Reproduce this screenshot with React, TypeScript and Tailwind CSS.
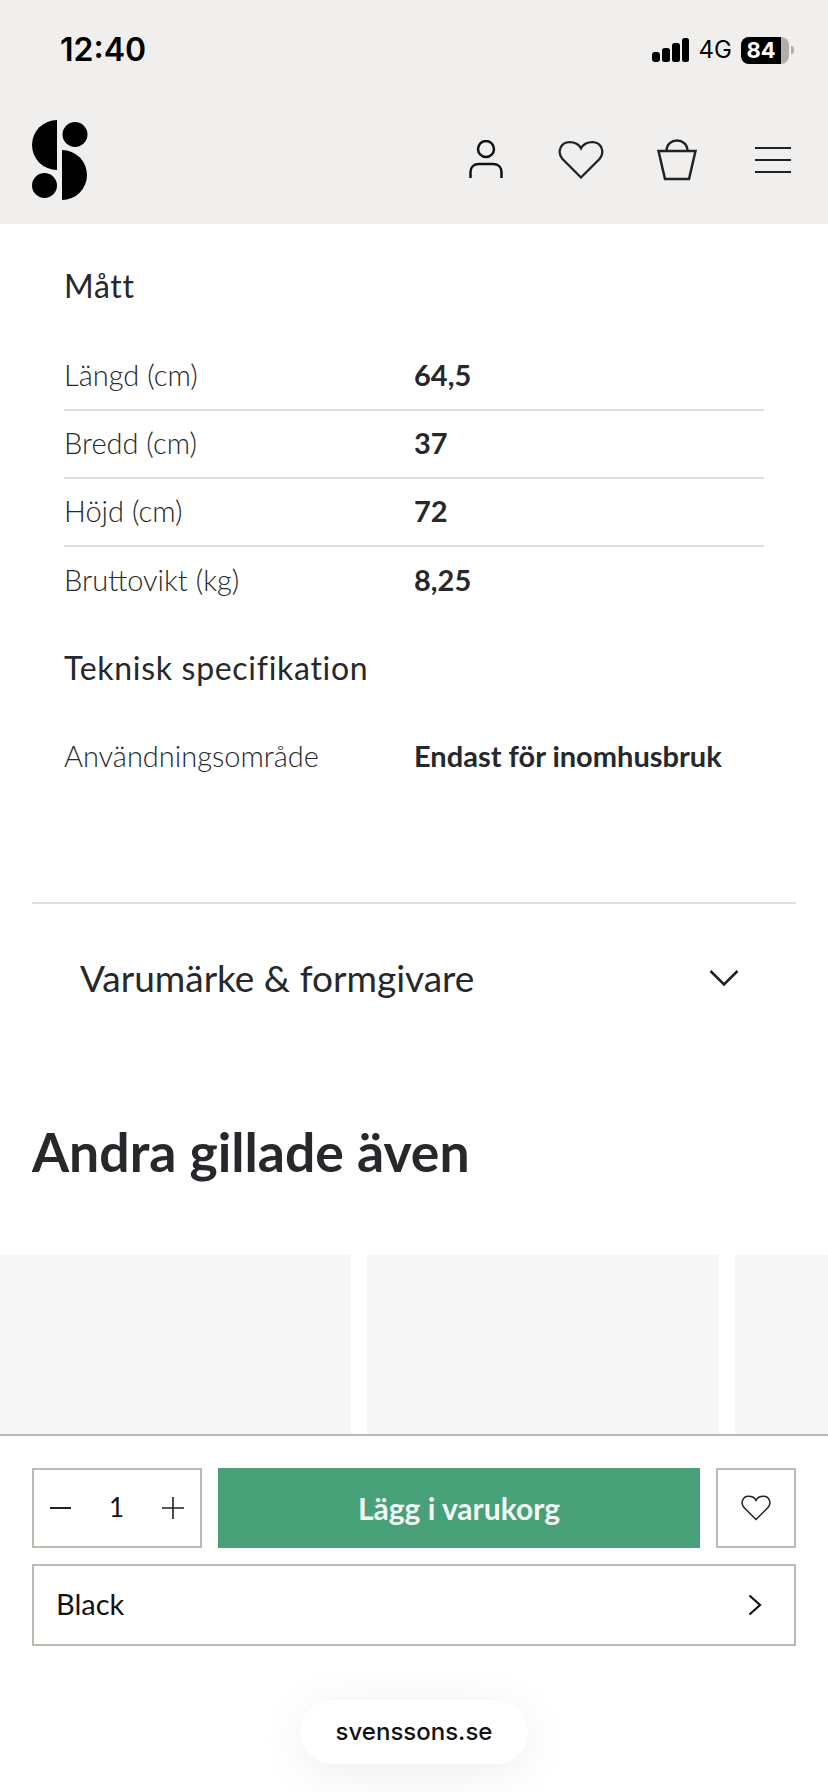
const ff = "font-['Lato','Inter',sans-serif]";

function Row({ label, value, border = true }: { label: string; value: string; border?: boolean }) {
  return (
    <div className={`flex h-[68px] items-center pb-[2px] ${border ? "border-b-2 border-[#dedede]" : ""}`}>
      <div className="w-[350px] text-[29px] font-light text-[#26282b]">{label}</div>
      <div className="text-[29px] font-bold text-[#26282b]">{value}</div>
    </div>
  );
}

function Logo() {
  return (
    <svg width="56" height="80" viewBox="0 0 56 80" fill="#000">
      <path d="M25 0 A25 25 0 0 0 0 25 A25 25 0 0 0 25 50 Z" />
      <circle cx="43" cy="14.5" r="12.5" />
      <circle cx="12.5" cy="65.5" r="12.5" />
      <path d="M30 30 A25 25 0 0 1 55 55 A25 25 0 0 1 30 80 Z" />
    </svg>
  );
}

function Heart({ size, sw }: { size: number; sw: number }) {
  return (
    <svg width={size} height={size * 0.86} viewBox="0 0 44 38" fill="none" stroke="#222" strokeWidth={sw} strokeLinejoin="miter">
      <path d="M22 36 L4 18 C-1 12 2 2 11 2 C16 2 20 4 22 8 C24 4 28 2 33 2 C42 2 45 12 40 18 Z" />
    </svg>
  );
}

export default function App() {
  return (
    <div className={`flex h-[1792px] w-[828px] flex-col overflow-hidden bg-white ${ff}`}>
      <header className="h-[224px] shrink-0 bg-[#f0efee]">
        <div className="flex h-[100px] items-center justify-between pl-[60px] pr-[34px]">
          <span className="font-['Inter'] text-[32px] font-semibold text-black">12:40</span>
          <div className="flex items-center gap-[9px]">
            <svg width="38" height="24" viewBox="0 0 38 24" fill="#000">
              <rect x="0" y="14" width="8" height="10" rx="3" />
              <rect x="10" y="10" width="8" height="14" rx="2.5" />
              <rect x="20" y="5" width="8" height="19" rx="2.5" />
              <rect x="30" y="0" width="7" height="24" rx="2.5" />
            </svg>
            <span className="font-['Inter'] text-[24px] font-normal text-black">4G</span>
            <div className="flex items-center gap-[2px]">
              <div className="relative flex h-[27px] w-[48px] items-center overflow-hidden rounded-[8px] bg-[#b0afae]">
                <div className="flex h-full w-[40px] items-center justify-center bg-black font-['Inter'] text-[22px] font-bold text-white">84</div>
              </div>
              <div className="h-[8px] w-[3px] rounded-r-full bg-[#b0afae]" />
            </div>
          </div>
        </div>
        <div className="flex items-start justify-between pl-[32px] pr-[37px] pt-[20px]">
          <Logo />
          <div className="flex items-center pt-[19px]">
            <svg className="mr-[55px]" width="34" height="40" viewBox="0 0 34 40" fill="none" stroke="#111" strokeWidth="2.5">
              <circle cx="17" cy="9" r="8" />
              <path d="M1.5 38 V32 C1.5 27 5 24 10 24 H24 C29 24 32.5 27 32.5 32 V38" />
            </svg>
            <div className="mr-[53px]"><Heart size={46} sw={2.2} /></div>
            <svg className="mr-[58px]" width="40" height="42" viewBox="0 0 40 42" fill="none" stroke="#222" strokeWidth="2.5">
              <path d="M1.5 12 H38.5 L32 40 H8 Z" />
              <path d="M9.5 12 C9.5 -2 30.5 -2 30.5 12" />
            </svg>
            <div className="flex w-[36px] flex-col gap-[10px]">
              <div className="h-[2px] bg-[#222]" />
              <div className="h-[2px] bg-[#222]" />
              <div className="h-[2px] bg-[#222]" />
            </div>
          </div>
        </div>
      </header>

      <main className="flex-1 overflow-hidden">
        <section className="px-[64px] pt-[40px]">
          <h3 className="text-[32px] leading-[44px] font-normal tracking-[0.7px] text-[#26282b]">Mått</h3>
          <div className="mt-[35px]">
            <Row label="Längd (cm)" value="64,5" />
            <Row label="Bredd (cm)" value="37" />
            <Row label="Höjd (cm)" value="72" />
            <Row label="Bruttovikt (kg)" value="8,25" border={false} />
          </div>
          <h3 className="mt-[31px] text-[32px] leading-[44px] font-normal tracking-[0.7px] text-[#26282b]">Teknisk specifikation</h3>
          <div className="mt-[33px]">
            <Row label="Användningsområde" value="Endast för inomhusbruk" border={false} />
          </div>
        </section>
        <div className="mx-[32px] mt-[111px] flex h-[150px] items-center justify-between border-t-2 border-[#e0dfdc] pl-[48px] pr-[57px] pb-[1px]">
          <span className="text-[37px] font-normal text-[#26282b]">Varumärke &amp; formgivare</span>
          <svg width="30" height="18" viewBox="0 0 30 18" fill="none" stroke="#222" strokeWidth="2.6"><path d="M1.5 2 L15 15.5 L28.5 2" /></svg>
        </div>
        <h2 className="mx-[32px] mt-[69px] text-[53.5px] leading-[60px] font-bold text-[#26282b]">Andra gillade även</h2>
        <div className="mt-[74px] flex gap-[16px]">
          <div className="h-[200px] w-[351px] shrink-0 bg-[#f6f6f6]" />
          <div className="h-[200px] w-[352px] shrink-0 bg-[#f6f6f6]" />
          <div className="h-[200px] w-[352px] shrink-0 bg-[#f6f6f6]" />
        </div>
      </main>

      <footer className="h-[358px] shrink-0 border-t-2 border-[#bdb9b1] bg-white px-[32px] pt-[32px]">
        <div className="flex h-[80px] gap-[16px]">
          <div className="flex w-[170px] items-center justify-between border-2 border-[#bdb9b1] pl-[16px] pr-[16px]">
            <div className="h-[2px] w-[21px] bg-[#222]" />
            <span className="pb-[2px] text-[26px] font-normal text-[#111]">1</span>
            <svg width="22" height="22" viewBox="0 0 22 22" stroke="#222" strokeWidth="1.6"><path d="M0 11 H22 M11 0 V22" /></svg>
          </div>
          <div className="flex w-[482px] items-center justify-center bg-[#48a078] text-[30px] font-bold text-[#f2f8f5]">Lägg i varukorg</div>
          <div className="flex w-[80px] items-center justify-center border-2 border-[#bdb9b1]"><Heart size={30} sw={2.2} /></div>
        </div>
        <div className="mt-[16px] flex h-[82px] items-center justify-between border-2 border-[#bdb9b1] pl-[22px] pr-[32px]">
          <span className="pb-[3px] text-[29px] font-normal text-[#111]">Black</span>
          <svg width="14" height="22" viewBox="0 0 14 22" fill="none" stroke="#111" strokeWidth="2.2"><path d="M1.5 1.5 L12 11 L1.5 20.5" /></svg>
        </div>
        <div className="mt-[54px] flex justify-center">
          <div className="flex h-[64px] w-[228px] items-center justify-center rounded-full bg-white font-['Inter'] text-[24px] font-medium text-[#111] shadow-[0_8px_50px_rgba(0,0,0,0.07)]">svenssons.se</div>
        </div>
      </footer>
    </div>
  );
}
